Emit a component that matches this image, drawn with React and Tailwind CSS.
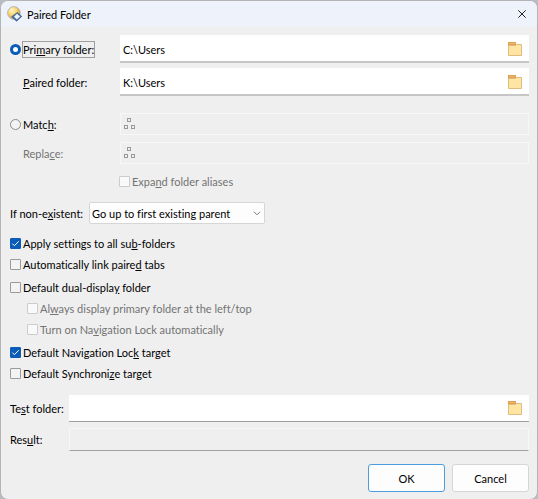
import { useState } from "react";

function FolderIcon() {
  return (
    <svg width="14" height="14" viewBox="0 0 14 14" aria-hidden="true">
      <path d="M0 0h8v4H0z" fill="#e0a050" />
      <path d="M1 1h6v1H1z" fill="#eeb670" />
      <path d="M0.5 3.5h7l1-1h5v11h-13z" fill="#ffe5a3" stroke="#dfbb7e" />
    </svg>
  );
}

function AliasIcon() {
  return (
    <svg width="11" height="12" viewBox="0 0 11 12" fill="none" stroke="#999999" aria-hidden="true">
      <rect x="3.5" y="0.5" width="3" height="3" />
      <rect x="0.5" y="7.5" width="3" height="3" />
      <rect x="7.5" y="7.5" width="3" height="3" />
    </svg>
  );
}

function AppIcon() {
  return (
    <svg width="16" height="16" viewBox="0 0 16 16" aria-hidden="true">
      <defs>
        <radialGradient id="globe" cx="0.35" cy="0.3" r="0.75">
          <stop offset="0" stopColor="#fff6cf" />
          <stop offset="0.45" stopColor="#f8d775" />
          <stop offset="1" stopColor="#d39c35" />
        </radialGradient>
      </defs>
      <circle cx="6.9" cy="6.9" r="6.3" fill="url(#globe)" stroke="#a3a9b4" strokeWidth="0.8" />
      <path d="M4.6 10.8l5.9-4.3 4.2 3.9-5.1 4.8z" fill="#456fa8" stroke="#3a5a88" strokeWidth="0.7" />
      <path d="M10 7.7l3.2 2.8-3.4 3.1-2.8-2.8z" fill="#f1f5fb" />
    </svg>
  );
}

function Check({ id, children, defaultChecked = false, disabled = false }) {
  return (
    <div className={`flex h-[21px] items-center gap-[2px] ${disabled ? "text-[#737373]" : ""}`}>
      <span className="grid shrink-0">
        <input
          id={id}
          type="checkbox"
          defaultChecked={defaultChecked}
          disabled={disabled}
          className="peer col-start-1 row-start-1 size-[11px] appearance-none rounded-[1px] border border-[#9a9a9a] bg-[#f3f3f3] checked:border-[#0a5cb8] checked:bg-[#0a5cb8] disabled:border-[#cccccc] disabled:bg-[#f9f9f9]"
        />
        <svg
          viewBox="0 0 11 11"
          className="pointer-events-none invisible col-start-1 row-start-1 size-[11px] peer-checked:visible"
          fill="none"
          stroke="white"
          aria-hidden="true"
        >
          <path d="M2.3 5.6l2.1 2.1 4.3-4.4" />
        </svg>
      </span>
      <label htmlFor={id}>{children}</label>
    </div>
  );
}

function FolderField({ id, defaultValue, className }) {
  return (
    <div className={`flex min-w-0 flex-1 items-center bg-white pr-[7px] pl-[3px] ${className}`}>
      <input id={id} defaultValue={defaultValue} className="h-full min-w-0 flex-1 outline-none" />
      <button type="button" aria-label="Browse">
        <FolderIcon />
      </button>
    </div>
  );
}

function AliasField({ id }) {
  return (
    <div className="flex h-[22px] min-w-0 flex-1 items-center gap-1 border border-[#f7f7f7] px-[3px]">
      <button type="button" disabled aria-label="Insert alias">
        <AliasIcon />
      </button>
      <input id={id} disabled className="min-w-0 flex-1" />
    </div>
  );
}

const radio =
  "size-[11px] shrink-0 appearance-none rounded-full border border-[#8c8c8c] bg-[#f3f3f3] checked:border-[3px] checked:border-[#0a5cb8] checked:bg-white";

export default function App() {
  const [mode, setMode] = useState("primary");
  return (
    <div className="bg-[#b9bcc1] font-[Lato,'Open_Sans',sans-serif] text-[11px] leading-[15px] text-black [font-variant-ligatures:none]">
      <main className="overflow-hidden rounded-lg border border-[#b4b4b4] bg-[#efefef]">
        <header className="flex h-[26px] items-center gap-1 bg-[#edf2fb] pr-[11px] pl-[6px]">
          <AppIcon />
          <h1 className="flex-1">Paired Folder</h1>
          <button type="button" aria-label="Close">
            <svg width="8" height="8" viewBox="0 0 8 8" stroke="#222" aria-hidden="true">
              <path d="M0.3 0.3l7.4 7.4M7.7 0.3L0.3 7.7" />
            </svg>
          </button>
        </header>

        <form className="flex flex-col pt-2 pr-2 pb-[7px] pl-[9px]" onSubmit={(e) => e.preventDefault()}>
          <div className="flex items-center">
            <div className="flex w-[110px] items-center gap-[1px]">
              <input id="primary" name="mode" type="radio" className={radio} checked={mode === "primary"} onChange={() => setMode("primary")} />
              <label htmlFor="primary" className="border border-[#9f9f9f]">
                Pri<u>m</u>ary folder:
              </label>
            </div>
            <FolderField id="primary-path" defaultValue="C:\Users" className="h-7 border-b-2 border-[#c6c6c6] pt-[2px]" />
          </div>
          <div className="mt-[5px] flex items-center">
            <label htmlFor="paired-path" className="w-[110px] pl-[13px]">
              <u>P</u>aired folder:
            </label>
            <FolderField id="paired-path" defaultValue="K:\Users" className="h-7 border-b-2 border-[#c6c6c6] pt-[2px]" />
          </div>

          <div className="mt-[17px] flex items-center">
            <div className="flex w-[110px] items-center gap-[2px]">
              <input id="match" name="mode" type="radio" className={radio} checked={mode === "match"} onChange={() => setMode("match")} />
              <label htmlFor="match">
                Matc<u>h</u>:
              </label>
            </div>
            <AliasField id="match-pattern" />
          </div>
          <div className="mt-[7px] flex items-center">
            <label htmlFor="replace" className="w-[110px] pl-[13px] text-[#737373]">
              Repla<u>c</u>e:
            </label>
            <AliasField id="replace" />
          </div>
          <div className="mt-[7px] pl-[109px]">
            <Check id="expand" disabled>
              Expa<u>n</u>d folder aliases
            </Check>
          </div>

          <div className="mt-[10px] flex items-center">
            <label htmlFor="missing" className="w-[79px]">
              If non-e<u>x</u>istent:
            </label>
            <div className="grid w-[176px] items-center">
              <select id="missing" className="col-start-1 row-start-1 h-[22px] appearance-none rounded-[2px] border border-[#d6d6d6] bg-[#fdfdfd] pr-5 pl-[2px]">
                <option>Go up to first existing parent</option>
              </select>
              <svg className="pointer-events-none col-start-1 row-start-1 mr-1 h-[5px] w-2 justify-self-end" viewBox="0 0 8 5" fill="none" stroke="#777" aria-hidden="true">
                <path d="M1 0.8l3 3 3-3" />
              </svg>
            </div>
          </div>

          <div className="mt-[9px] flex flex-col gap-[2px]">
            <div>
              <Check id="apply" defaultChecked>
                Apply settings to all su<u>b</u>-folders
              </Check>
              <Check id="link">
                Automatically link paire<u>d</u> tabs
              </Check>
            </div>
            <div>
              <Check id="dual">
                Default dual-displa<u>y</u> folder
              </Check>
              <div className="pl-[17px]">
                <Check id="always" disabled>
                  Al<u>w</u>ays display primary folder at the left/top
                </Check>
                <Check id="navauto" disabled>
                  Turn on Na<u>v</u>igation Lock automatically
                </Check>
              </div>
            </div>
            <div>
              <Check id="navlock" defaultChecked>
                Default Navigation Loc<u>k</u> target
              </Check>
              <Check id="sync">
                Default Synchroni<u>z</u>e target
              </Check>
            </div>
          </div>

          <div className="mt-[11px] flex items-center">
            <label htmlFor="test" className="w-[59px]">
              Te<u>s</u>t folder:
            </label>
            <FolderField id="test" className="h-[27px] border-b border-[#a0a0a0]" />
          </div>
          <div className="mt-[6px] flex items-center">
            <label htmlFor="result" className="w-[59px]">
              Res<u>u</u>lt:
            </label>
            <input id="result" readOnly className="h-[23px] min-w-0 flex-1 border border-[#f7f7f7] border-b-[#a0a0a0] outline-none" />
          </div>

          <div className="mt-[13px] flex justify-end gap-[7px]">
            <button type="submit" className="h-7 w-[77px] rounded-[3px] border border-[#4b9de0] bg-[#fdfdfd]">
              OK
            </button>
            <button type="button" className="h-7 w-[77px] rounded-[3px] border border-[#d6d6d6] bg-[#fdfdfd]">
              Cancel
            </button>
          </div>
        </form>
      </main>
    </div>
  );
}
